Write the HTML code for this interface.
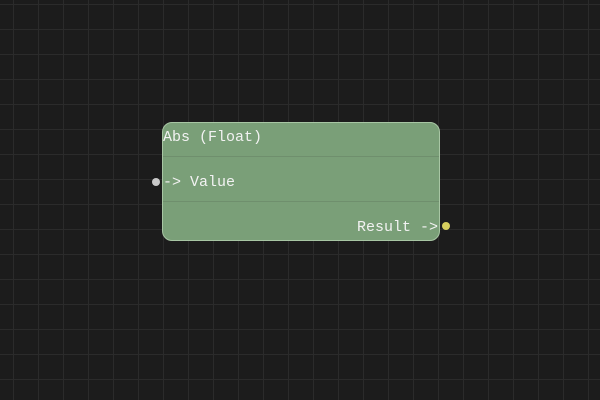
<!DOCTYPE html>
<html><head><style>
html,body{margin:0;padding:0;}
body{width:600px;height:400px;overflow:hidden;position:relative;background-color:#1c1c1c;
background-image:linear-gradient(to right,#2b2b2b 1px,transparent 1px),linear-gradient(to bottom,#2b2b2b 1px,transparent 1px);
background-size:25px 25px;background-position:13px 4px;}
.node{position:absolute;left:162px;top:122px;width:276px;height:117px;background:#7a9f78;border:1.5px solid #a8c6a4;border-radius:10px;}
.line{position:absolute;left:0;right:0;height:1px;background:#6f8f6d;}
.t{position:absolute;font-family:"Liberation Mono",monospace;font-size:15px;color:#f2f2f2;white-space:pre;line-height:15px;}
.dot{position:absolute;width:8px;height:8px;border-radius:50%;}
</style></head><body>
<div class="node">
<div class="line" style="top:33px"></div>
<div class="line" style="top:78px"></div>
</div>
<div class="t" style="left:163px;top:130px">Abs (Float)</div>
<div class="t" style="left:163px;top:175px">-> Value</div>
<div class="t" style="left:357px;top:220px">Result -></div>
<div class="dot" style="left:152px;top:178px;background:#c8c8c8"></div>
<div class="dot" style="left:442px;top:222px;background:#d6cf5e"></div>
</body></html>
